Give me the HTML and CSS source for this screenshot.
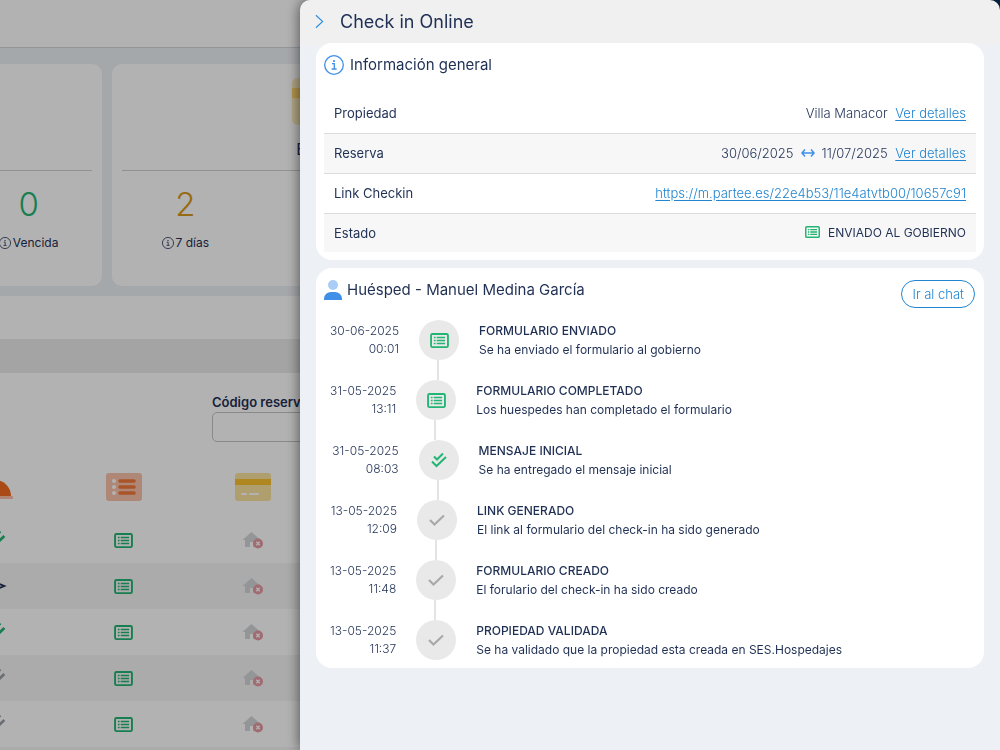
FILE: index.html
```html
<!DOCTYPE html>
<html lang="es">
<head>
    <meta charset="UTF-8">
    <meta name="viewport" content="width=device-width, initial-scale=1.0">
    <title>Check in Online</title>
    <link rel="stylesheet" href="styles.css">
</head>
<body>
    <!-- Shared icons -->
    <svg class="sprite" aria-hidden="true">
        <symbol id="icon-list" viewBox="0 0 20 16">
            <rect x="1" y="1" width="18" height="14" rx="1.5" fill="none" stroke="currentColor" stroke-width="2"/>
            <path d="M4 4.800h1.800M4 8h1.800M4 11.200h1.800M7 4.800H16M7 8H16M7 11.200H16" stroke="currentColor" stroke-width="1.8"/>
        </symbol>
        <symbol id="icon-check" viewBox="0 0 18 18">
            <path d="M2 9l4.500 4.500 9.500-9" fill="none" stroke="currentColor" stroke-width="2.2"/>
        </symbol>
        <symbol id="icon-double" viewBox="0 0 18 18">
            <path d="M4 5.500l3 3 6-6M2 10.500l4.500 4.500 9.500-9" fill="none" stroke="currentColor" stroke-width="2"/>
        </symbol>
        <symbol id="icon-info" viewBox="0 0 20 20">
            <circle cx="10" cy="10" r="9.3" fill="none" stroke="currentColor" stroke-width="1.3"/>
            <path d="M8 8.7h2.3v5M7.6 14h5" fill="none" stroke="currentColor" stroke-width="1.3"/>
            <circle cx="10" cy="6" r="1.1" fill="currentColor"/>
        </symbol>
        <symbol id="icon-card" viewBox="0 0 36 28">
            <rect width="36" height="28" rx="3" fill="#fbe4a0"/>
            <rect y="6" width="36" height="6" fill="#fbc02d"/>
            <path d="M7 21h4M15 21h8" stroke="#fff" stroke-width="2" stroke-linecap="round"/>
        </symbol>
        <symbol id="icon-house" viewBox="0 0 22 18">
            <path d="M9.500 1L0.500 9h2.500v7h5v-5h3v5h6V9h1.500z" fill="#d3d6d8"/>
            <circle cx="16" cy="12.500" r="5" fill="#e79aa4"/>
            <path d="M14.300 10.800l3.400 3.400M17.700 10.800l-3.400 3.400" stroke="#fff" stroke-width="1.300"/>
        </symbol>
    </svg>

    <div class="page">
        <header class="topbar"><div class="topbar-user"></div></header>

        <div class="cards">
            <section class="card">
                <div class="card-head"></div>
                <div class="card-stats">
                    <div class="stat"></div>
                    <div class="stat"></div>
                    <div class="stat">
                        <span class="stat-number green">0</span>
                        <span class="stat-label"><svg class="icon-tiny"><use href="#icon-info"/></svg>Vencida</span>
                    </div>
                </div>
            </section>
            <section class="card">
                <div class="card-head">
                    <svg class="card-icon"><use href="#icon-card"/></svg>
                    <span>Estado</span>
                </div>
                <div class="card-stats">
                    <div class="stat">
                        <span class="stat-number amber">2</span>
                        <span class="stat-label"><svg class="icon-tiny"><use href="#icon-info"/></svg>7 días</span>
                    </div>
                </div>
            </section>
        </div>

        <section class="results">
            <div class="results-bar"></div>
            <form class="filter">
                <label for="bookingCode">Código reserva</label>
                <input type="text" id="bookingCode" name="bookingCode">
            </form>
            <table class="bookings">
                <thead>
                    <tr>
                        <th>
                            <svg class="icon-head" viewBox="0 0 36 28"><circle cx="18" cy="4" r="2.500" fill="#f9c0a5"/><path d="M2 23a16 16 0 0 1 32 0z" fill="#f26a21"/><rect y="23" width="36" height="3" rx="1" fill="#f9c0a5"/></svg>
                        </th>
                        <th>
                            <svg class="icon-head" viewBox="0 0 36 28"><rect width="36" height="28" rx="3" fill="#fbc2ab"/><path d="M14 8h14M14 14h14M14 20h14" stroke="#f47a3c" stroke-width="3.600" stroke-linecap="round"/><g fill="#fff"><circle cx="8" cy="8" r="2"/><circle cx="8" cy="14" r="2"/><circle cx="8" cy="20" r="2"/></g></svg>
                        </th>
                        <th><svg class="icon-head"><use href="#icon-card"/></svg></th>
                        <th class="rest"></th>
                    </tr>
                </thead>
                <tbody>
                    <tr>
                        <td><svg class="icon-state green"><use href="#icon-double"/></svg></td>
                        <td><svg class="icon-list green"><use href="#icon-list"/></svg></td>
                        <td><svg class="icon-house"><use href="#icon-house"/></svg></td>
                        <td></td>
                    </tr>
                    <tr>
                        <td><svg class="icon-state navy" viewBox="0 0 18 18"><path d="M1 3l15 6-15 6 3-6z" fill="none" stroke="currentColor" stroke-width="1.300"/></svg></td>
                        <td><svg class="icon-list green"><use href="#icon-list"/></svg></td>
                        <td><svg class="icon-house"><use href="#icon-house"/></svg></td>
                        <td></td>
                    </tr>
                    <tr>
                        <td><svg class="icon-state green"><use href="#icon-double"/></svg></td>
                        <td><svg class="icon-list green"><use href="#icon-list"/></svg></td>
                        <td><svg class="icon-house"><use href="#icon-house"/></svg></td>
                        <td></td>
                    </tr>
                    <tr>
                        <td><svg class="icon-state gray"><use href="#icon-double"/></svg></td>
                        <td><svg class="icon-list green"><use href="#icon-list"/></svg></td>
                        <td><svg class="icon-house"><use href="#icon-house"/></svg></td>
                        <td></td>
                    </tr>
                    <tr>
                        <td><svg class="icon-state gray"><use href="#icon-double"/></svg></td>
                        <td><svg class="icon-list green"><use href="#icon-list"/></svg></td>
                        <td><svg class="icon-house"><use href="#icon-house"/></svg></td>
                        <td></td>
                    </tr>
                    <tr><td></td><td></td><td></td><td></td></tr>
                </tbody>
            </table>
        </section>
    </div>

    <div class="overlay"></div>

    <aside class="drawer">
        <header class="drawer-head">
            <button type="button" class="close" aria-label="Cerrar">
                <svg class="icon-close" viewBox="0 0 10 16"><path d="M1 1l7.500 7L1 15" fill="none" stroke="currentColor" stroke-width="1.300"/></svg>
            </button>
            <h1>Check in Online</h1>
        </header>

        <main class="drawer-body">
            <section class="panel">
                <h2><svg class="icon-title"><use href="#icon-info"/></svg>Información general</h2>
                <table class="info">
                    <tr>
                        <th scope="row">Propiedad</th>
                        <td>Villa Manacor <a class="details" href="#">Ver detalles</a></td>
                    </tr>
                    <tr>
                        <th scope="row">Reserva</th>
                        <td>30/06/2025<svg class="icon-arrow" viewBox="0 0 14 10"><path d="M1 5h12M4 1.500L1 5l3 3.500M10 1.500L13 5l-3 3.500" fill="none" stroke="currentColor" stroke-width="1.500"/></svg>11/07/2025 <a class="details" href="#">Ver detalles</a></td>
                    </tr>
                    <tr>
                        <th scope="row">Link Checkin</th>
                        <td><a href="#">https://m.partee.es/22e4b53/11e4atvtb00/10657c91</a></td>
                    </tr>
                    <tr>
                        <th scope="row">Estado</th>
                        <td class="status"><svg class="icon-status"><use href="#icon-list"/></svg>ENVIADO AL GOBIERNO</td>
                    </tr>
                </table>
            </section>

            <section class="panel">
                <div class="guest">
                    <h2><svg class="icon-user" viewBox="0 0 18 20"><circle cx="9" cy="5" r="5" fill="#a9cdf7"/><path d="M0 20v-1.500a7 7 0 0 1 7-6.500h4a7 7 0 0 1 7 6.500V20z" fill="#3f8fe8"/></svg>Huésped - Manuel Medina García</h2>
                    <button type="button" class="chat">Ir al chat</button>
                </div>
                <ol class="timeline">
                    <li>
                        <time><span class="day">30-06-2025</span> 00:01</time>
                        <span class="dot green"><svg class="icon-list"><use href="#icon-list"/></svg></span>
                        <div class="event"><h3>FORMULARIO ENVIADO</h3><p>Se ha enviado el formulario al gobierno</p></div>
                    </li>
                    <li>
                        <time><span class="day">31-05-2025</span> 13:11</time>
                        <span class="dot green"><svg class="icon-list"><use href="#icon-list"/></svg></span>
                        <div class="event"><h3>FORMULARIO COMPLETADO</h3><p>Los huespedes han completado el formulario</p></div>
                    </li>
                    <li>
                        <time><span class="day">31-05-2025</span> 08:03</time>
                        <span class="dot green"><svg class="icon-state"><use href="#icon-double"/></svg></span>
                        <div class="event"><h3>MENSAJE INICIAL</h3><p>Se ha entregado el mensaje inicial</p></div>
                    </li>
                    <li>
                        <time><span class="day">13-05-2025</span> 12:09</time>
                        <span class="dot"><svg class="icon-state"><use href="#icon-check"/></svg></span>
                        <div class="event"><h3>LINK GENERADO</h3><p>El link al formulario del check-in ha sido generado</p></div>
                    </li>
                    <li>
                        <time><span class="day">13-05-2025</span> 11:48</time>
                        <span class="dot"><svg class="icon-state"><use href="#icon-check"/></svg></span>
                        <div class="event"><h3>FORMULARIO CREADO</h3><p>El forulario del check-in ha sido creado</p></div>
                    </li>
                    <li>
                        <time><span class="day">13-05-2025</span> 11:37</time>
                        <span class="dot"><svg class="icon-state"><use href="#icon-check"/></svg></span>
                        <div class="event"><h3>PROPIEDAD VALIDADA</h3><p>Se ha validado que la propiedad esta creada en SES.Hospedajes</p></div>
                    </li>
                </ol>
            </section>
        </main>
    </aside>
</body>
</html>
```
FILE: styles.css
```css
* {
    box-sizing: border-box;
}

body {
    margin: 0;
    height: 100vh;
    overflow: hidden;
    font-family: Inter, sans-serif;
    font-size: 13px;
    color: #1f3054;
    background-color: #edf1f5;
}

h1,
h2,
h3,
p {
    margin: 0;
    font-weight: 400;
}

svg {
    flex-shrink: 0;
}

a {
    color: #2185d0;
    text-underline-offset: 2px;
}

.sprite {
    display: none;
}

.green {
    color: #22b573;
}

.amber {
    color: #d99a1c;
}

.gray {
    color: #9a9ea6;
}

.navy {
    color: #1f3054;
}

/* Page behind the drawer */
.page {
    height: 100vh;
    overflow: hidden;
}

.topbar {
    display: flex;
    justify-content: flex-end;
    height: 48px;
    background-color: #fff;
    border-bottom: 1px solid #d4d6d8;
}

.topbar-user {
    width: 200px;
    background-color: #0b3a66;
}

.cards {
    display: flex;
    gap: 10px;
    margin: 16px 0 10px -298px;
}

.card {
    flex: 0 0 400px;
    height: 222px;
    padding: 0 10px;
    background-color: #fff;
    border-radius: 10px;
}

.card-head {
    display: flex;
    flex-direction: column;
    align-items: center;
    gap: 14px;
    height: 107px;
    padding: 14px 0 0 20px;
    font-size: 16px;
    border-bottom: 1px solid #d0d0d0;
}

.card-icon {
    width: 60px;
    height: 47px;
    opacity: 0.7;
}

.card-stats {
    display: grid;
    grid-template-columns: repeat(3, 1fr);
}

.stat {
    display: flex;
    flex-direction: column;
    align-items: center;
    gap: 10px;
    padding-top: 13px;
}

.stat-number {
    font-size: 33px;
    font-weight: 300;
    line-height: 40px;
}

.stat-label {
    display: flex;
    align-items: center;
    gap: 2px;
    font-size: 12px;
    line-height: 18px;
}

.icon-tiny {
    width: 12px;
    height: 12px;
}

.results {
    padding-top: 43px;
    background-color: #fff;
}

.results-bar {
    height: 34px;
    background-color: #ebebeb;
}

.filter {
    display: flex;
    flex-direction: column;
    padding: 20px 0 31px 212px;
}

.filter label {
    font-weight: 600;
    line-height: 19px;
}

.filter input {
    width: 200px;
    height: 30px;
    background-color: #fff;
    border: 1px solid #c4c4c4;
    border-radius: 5px;
}

.bookings {
    width: calc(100% + 70px);
    margin-left: -70px;
    table-layout: fixed;
    border-collapse: collapse;
}

.bookings th {
    width: 129px;
    height: 44px;
    padding: 0 0 16px;
}

.bookings .rest {
    width: auto;
}

.bookings td {
    height: 46px;
    padding: 0;
    text-align: center;
}

.bookings tbody tr:nth-child(even) {
    background-color: #f5f5f5;
}

.bookings svg {
    display: block;
    margin: 0 auto;
}

.icon-head {
    width: 36px;
    height: 28px;
}

.icon-list {
    width: 19px;
    height: 15px;
}

.icon-state {
    width: 18px;
    height: 18px;
}

.bookings .icon-state {
    width: 24px;
    height: 24px;
}

.icon-house {
    width: 22px;
    height: 18px;
}

.overlay {
    position: fixed;
    inset: 0;
    background-color: rgba(0, 0, 0, 0.3);
}

/* Drawer */
.drawer {
    position: fixed;
    top: 0;
    right: 0;
    bottom: 0;
    width: 70%;
    overflow: hidden;
    background: linear-gradient(#f0f0f0 45px, #edf1f5 45px);
    border-radius: 10px 10px 0 0;
    box-shadow: 0 0 14px rgba(0, 0, 0, 0.6);
}

.drawer-head {
    display: flex;
    align-items: center;
    gap: 16px;
    height: 43px;
    padding: 0 15px;
}

.drawer-head h1 {
    font-size: 18px;
}

.close {
    display: flex;
    padding: 0;
    color: #2f8fe0;
    background: none;
    border: none;
    cursor: pointer;
}

.icon-close {
    width: 9px;
    height: 15px;
}

.drawer-body {
    display: flex;
    flex-direction: column;
    gap: 8px;
    padding: 0 16px;
}

.panel {
    padding: 8px;
    background-color: #fff;
    border-radius: 16px;
}

.panel h2 {
    display: flex;
    align-items: center;
    gap: 6px;
    font-size: 15px;
    line-height: 28px;
}

.icon-title {
    width: 20px;
    height: 20px;
    color: #3f8fe8;
}

.icon-user {
    width: 18px;
    height: 20px;
}

.info {
    width: 100%;
    margin-top: 14px;
    border-collapse: collapse;
}

.info tr:nth-child(even) {
    background-color: #f7f7f7;
}

.info tr + tr {
    border-top: 1px solid #dcdcdc;
}

.info th,
.info td {
    height: 40px;
    padding: 0 10px;
    font-weight: 400;
    text-align: left;
}

.info tr:last-child th,
.info tr:last-child td {
    height: 39px;
}

.info td {
    font-weight: 300;
    text-align: right;
}

.info .status {
    font-size: 12px;
    font-weight: 400;
}

.details {
    margin-left: 4px;
}

.icon-arrow {
    width: 14px;
    height: 10px;
    margin: 0 7px;
    color: #3f8fe8;
}

.icon-status {
    width: 15px;
    height: 12px;
    margin-right: 8px;
    color: #22b573;
    vertical-align: -1px;
}

.guest {
    display: flex;
    align-items: flex-start;
    justify-content: space-between;
    padding-right: 1px;
}

.guest h2 {
    gap: 5px;
}

.chat {
    height: 28px;
    margin-top: 4px;
    padding: 0 10px;
    font-family: inherit;
    font-size: 13px;
    font-weight: 300;
    color: #2185d0;
    background-color: #fff;
    border: 1px solid #2185d0;
    border-radius: 14px;
    cursor: pointer;
}

.timeline {
    display: flex;
    flex-direction: column;
    gap: 20px;
    margin: 12px 0 0;
    padding: 0 0 0 6px;
    list-style: none;
}

.timeline li {
    display: flex;
    height: 40px;
}

.timeline time {
    font-size: 12px;
    font-weight: 300;
    line-height: 18px;
    text-align: right;
    margin-top: 2px;
}

.day {
    white-space: nowrap;
}

.dot {
    position: relative;
    display: flex;
    flex: 0 0 40px;
    align-items: center;
    justify-content: center;
    height: 40px;
    margin: 0 20px;
    color: #a9a9a9;
    background-color: #eae9e9;
    border-radius: 50%;
}

.dot.green {
    color: #22b573;
}

/* Connector down to the next step */
.timeline li:not(:last-child) .dot::after {
    content: "";
    position: absolute;
    top: 100%;
    left: 18px;
    width: 2px;
    height: 20px;
    background-color: #e4e4e4;
}

.event {
    flex: 0 1 115%;
    line-height: 19px;
    padding-top: 1px;
    font-size: 12px;
}

.event h3 {
    font-size: 12px;
    font-weight: 500;
}
```
